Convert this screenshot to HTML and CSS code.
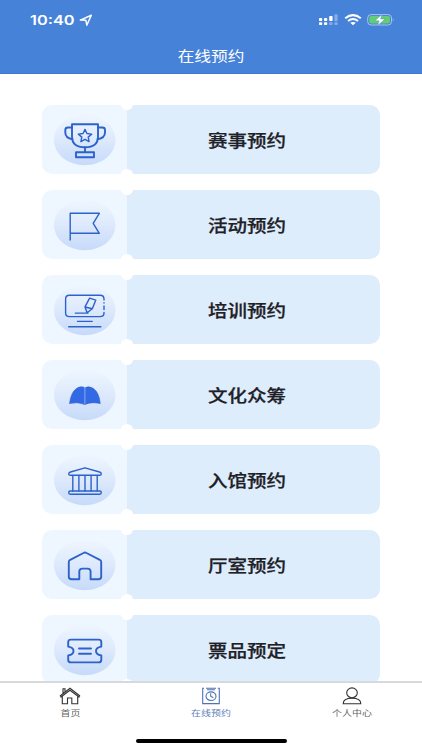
FILE: index.html
```html
<!DOCTYPE html>
<html lang="zh-CN">
<head>
<meta charset="utf-8">
<title>在线预约</title>
<link rel="stylesheet" href="styles.css">
</head>
<body>
<div class="app">
  <header class="header">
    <div class="status">
      <span class="time">10:40</span>
      <svg class="locate" width="14" height="13" viewBox="0 0 14 13"><path d="M1.3 6.1 12.3 1.2 7.8 11.2 6.9 6.3Z"/></svg>
      <svg class="signals" width="78" height="14" viewBox="0 0 78 14">
        <g fill="#fff"><rect x="1" y="5" width="3.2" height="3" rx=".8"/><rect x="6" y="5" width="3.2" height="3" rx=".8"/><rect x="11.2" y="3" width="3.4" height="5" rx=".8"/><rect x="1" y="9.2" width="3.2" height="2.8" rx=".8"/><rect x="6" y="9.2" width="3.2" height="2.8" rx=".8"/></g>
        <g fill="#fff" opacity=".35"><rect x="16.4" y="1.2" width="3.2" height="7" rx=".8"/><rect x="11.2" y="9.2" width="3.4" height="2.8" rx=".8"/><rect x="16.4" y="9.2" width="3.2" height="2.8" rx=".8"/></g>
        <g fill="none" stroke="#fff" stroke-width="2"><path d="M27.2 5.2Q35 -1 42.8 5.2M30 8Q35 4 40 8"/></g><path d="M32.2 9.8Q35 8 37.8 9.8L35 12.2Z" fill="#fff"/>
        <rect x="49.7" y="1.6" width="23.8" height="10.4" rx="3.4" fill="none" stroke="#a6c4ef"/>
        <rect x="51.2" y="3.1" width="20.8" height="7.4" rx="2" fill="#63cd73"/>
        <path d="M74.8 5.2q1.8 1.6 0 3.2" fill="#a6c4ef"/>
        <path d="M64 1.6 56.8 7.8h4.4l-1.7 4.8 7.6-6.5h-4.5Z" fill="#fff" stroke="#4782d9" stroke-width=".4"/>
      </svg>
    </div>
    <h1 class="title"><span>在线预约</span></h1>
  </header>

  <main class="list">
    <a class="ticket">
      <svg class="icon" viewBox="0 0 85 69"><defs><linearGradient id="disc" x1="0" y1="0" x2="0" y2="1"><stop offset="0" stop-color="#eef6ff"/><stop offset=".5" stop-color="#dde9fc"/><stop offset="1" stop-color="#c6daf9"/></linearGradient></defs><ellipse cx="42.7" cy="35" rx="30.8" ry="25.3"/><g class="line bold"><path d="M30 19.2H56V31.5Q56 42.3 43 42.3T30 31.5Z"/><path d="M30 22.5H26Q23.3 22.5 23.3 25V27.5Q23.3 33 30.5 34.2M56 22.5h4.5Q63 22.5 63 25v2.5Q63 33 55.5 34.2M43 42.5v4.5"/><rect x="34" y="47.2" width="18" height="5"/></g><path class="line" d="m43 24.4 1.9 4.1 4.8.6-3.5 3 .9 4.5-4.1-2.3-4.1 2.3.9-4.5-3.5-3 4.8-.6Z"/></svg>
      <span class="body"><b>赛事预约</b></span>
    </a>
    <a class="ticket">
      <svg class="icon" viewBox="0 0 85 69"><ellipse cx="42.7" cy="35" rx="30.8" ry="25.3"/><path class="line" d="M28.2 50V23.3H57.3L51.2 33.3 57.3 43.3H28.2"/></svg>
      <span class="body"><b>活动预约</b></span>
    </a>
    <a class="ticket">
      <svg class="icon" viewBox="0 0 85 69"><ellipse cx="42.7" cy="35" rx="30.8" ry="25.3"/><g class="line"><path d="M62 25V24Q62 20.3 58 20.3H27.5Q23.6 20.3 23.6 24V38Q23.6 41.6 27.5 41.6H58Q62 41.6 62 38V37.5M62 27.7v.3M62 31v3.5"/><path d="m47.6 23.2 6.2 1.9-3.5 8.6-5.2 4-2.1-5.8ZM43 32l7.3 1.7M33.3 38.1H46M35.5 46.4H50.2M26.7 51.7H58.8"/></g></svg>
      <span class="body"><b>培训预约</b></span>
    </a>
    <a class="ticket">
      <svg class="icon" viewBox="0 0 85 69"><ellipse cx="42.7" cy="35" rx="30.8" ry="25.3"/><path class="book" d="M27.5 43.5Q29 32 34.8 28.2Q40 25.5 42.8 28Q46 25.5 51 28.2Q57 32 58.3 43.5Q49.5 41.5 42.9 44.5Q36 41.5 27.5 43.5Z"/><path class="spine" d="M42.9 28V44"/></svg>
      <span class="body"><b>文化众筹</b></span>
    </a>
    <a class="ticket">
      <svg class="icon" viewBox="0 0 85 69"><ellipse cx="42.7" cy="35" rx="30.8" ry="25.3"/><g class="line"><path d="M43 22.8 57.5 27Q59.3 27.7 59.3 29Q59.3 30.3 57.5 30.3H28.5Q26.7 30.3 26.7 29Q26.7 27.7 28.5 27Z"/><path d="M30.8 30.5V46M36.9 30.5V46M43 30.5V46M49.1 30.5V46M55.2 30.5V46"/><rect x="26.7" y="46" width="32.6" height="3.2" rx="1.6"/></g></svg>
      <span class="body"><b>入馆预约</b></span>
    </a>
    <a class="ticket">
      <svg class="icon" viewBox="0 0 85 69"><ellipse cx="42.7" cy="35" rx="30.8" ry="25.3"/><path class="line bold" d="M41.5 23Q43 22.1 44.5 23L57.8 29.8Q59.2 30.6 59.2 32V46.8Q59.2 49.2 56.5 49.2H48.6V41.5Q48.6 38.6 45.5 38.6H40.5Q37.3 38.6 37.3 41.5V49.2H29.5Q26.8 49.2 26.8 46.8V32Q26.8 30.6 28.2 29.8Z"/></svg>
      <span class="body"><b>厅室预约</b></span>
    </a>
    <a class="ticket">
      <svg class="icon" viewBox="0 0 85 69"><ellipse cx="42.7" cy="35" rx="30.8" ry="25.3"/><path class="line bold" d="M29 24.6H56.5Q59.3 24.6 59.3 27V31.6Q54 32.3 54 36T59.3 40.4V45Q59.3 47.4 56.5 47.4H29Q26.2 47.4 26.2 45V40.4Q31.5 39.7 31.5 36T26.2 31.6V27Q26.2 24.6 29 24.6ZM37 33.5H49M37 38.7H49"/></svg>
      <span class="body"><b>票品预定</b></span>
    </a>
  </main>

  <footer class="footer">
    <nav class="tabs">
      <a class="tab">
        <svg width="22" height="18" viewBox="0 0 22 18"><path d="M1 9 11 1.2 21 9M1 9l1 1L11 3.3 20 10l1-1M3.3 9.5V16.8H8.5V11H12.8V16.8H18.7V9.5M4 6.4V1.8H6V4.8"/></svg>
        <span>首页</span>
      </a>
      <a class="tab active">
        <svg width="22" height="18" viewBox="0 0 22 18"><path d="M4 1.2H2.7V16.6H19.3V1.2H17.8"/><path d="M6 1.2H16M7 2.8H15"/><ellipse cx="11" cy="9.2" rx="5" ry="4.3"/><path d="M10.7 6.2V9.3l2.6 1.5"/></svg>
        <span>在线预约</span>
      </a>
      <a class="tab">
        <svg width="22" height="18" viewBox="0 0 22 18"><ellipse cx="11" cy="5.8" rx="5.3" ry="4.9"/><path d="M2.2 16.7Q2.2 11.3 11 11.3T19.8 16.7Z"/></svg>
        <span>个人中心</span>
      </a>
    </nav>
    <div class="home-bar"></div>
  </footer>
</div>
</body>
</html>
```
FILE: styles.css
```css
* { box-sizing: border-box; }
body { margin: 0; background: #fff; font-family: "Inter", "Noto Sans CJK SC", sans-serif; }
.app { width: 422px; height: 750px; display: flex; flex-direction: column; overflow: hidden; }

.header { flex: none; height: 74px; background: #4782d9; border-bottom: 1px solid #3d77cd; color: #fff; }
.status { display: flex; align-items: center; height: 40px; padding: 0 26px 0 30px; }
.time { width: 45px; font-size: 13.5px; font-weight: 600; line-height: 16px; white-space: nowrap; transform: scaleX(1.21); transform-origin: left; }
.locate { margin-left: 4px; fill: none; stroke: #fff; stroke-width: 1.5; stroke-linejoin: round; }
.signals { margin-left: auto; }
.title { margin: 4px 0 0; font: 400 14px/22px "Noto Sans CJK SC", sans-serif; text-align: center; }
.title span { display: inline-block; transform: scaleX(1.19); }

.list { flex: 1; min-height: 0; overflow: hidden; padding: 31.4px 42px 0; display: flex; flex-direction: column; gap: 16px; }
.ticket { position: relative; flex: none; display: flex; height: 69px; border-radius: 10px; overflow: hidden; }
.ticket::before, .ticket::after { content: ""; position: absolute; left: 79px; width: 12px; height: 11px; border-radius: 50%; background: #fff; }
.ticket::before { top: -6px; }
.ticket::after { bottom: -6px; }
.icon { width: 85px; height: 69px; background: #eef6ff; fill: none; }
.icon ellipse { fill: url(#disc); }
.line { fill: none; stroke: #2d62ca; stroke-width: 1.4; stroke-linejoin: round; stroke-linecap: round; }
.bold { stroke-width: 1.9; }
.book { fill: #3369e5; stroke: #2d62ca; stroke-width: .6; }
.spine { stroke: #9bbcf5; stroke-width: .8; }
.body { flex: 1; display: flex; align-items: center; justify-content: center; padding-right: 14px; background: #deedfc; color: #1d2026; font: 17px/24px "Noto Sans CJK SC", sans-serif; }
.body b { font-weight: 500; -webkit-text-stroke: .25px #1d2026; transform: translateY(-.5px) scaleX(1.147); }

.footer { flex: none; height: 69px; border-top: 2px solid #d7dadc; background: #fff; }
.tabs { display: flex; height: 56px; padding-top: 4px; }
.tab { flex: 1; display: flex; flex-direction: column; align-items: center; color: #666; font: 8.5px/14px "Noto Sans CJK SC", sans-serif; }
.tab svg { fill: none; stroke: #333; stroke-width: 1.1; }
.tab span { transform: scaleX(1.17); }
.active { color: #5f7fb9; }
.active svg { stroke: #4d73b8; }
.home-bar { width: 151px; height: 4px; margin: 0 auto; border-radius: 2px; background: #000; }
```
